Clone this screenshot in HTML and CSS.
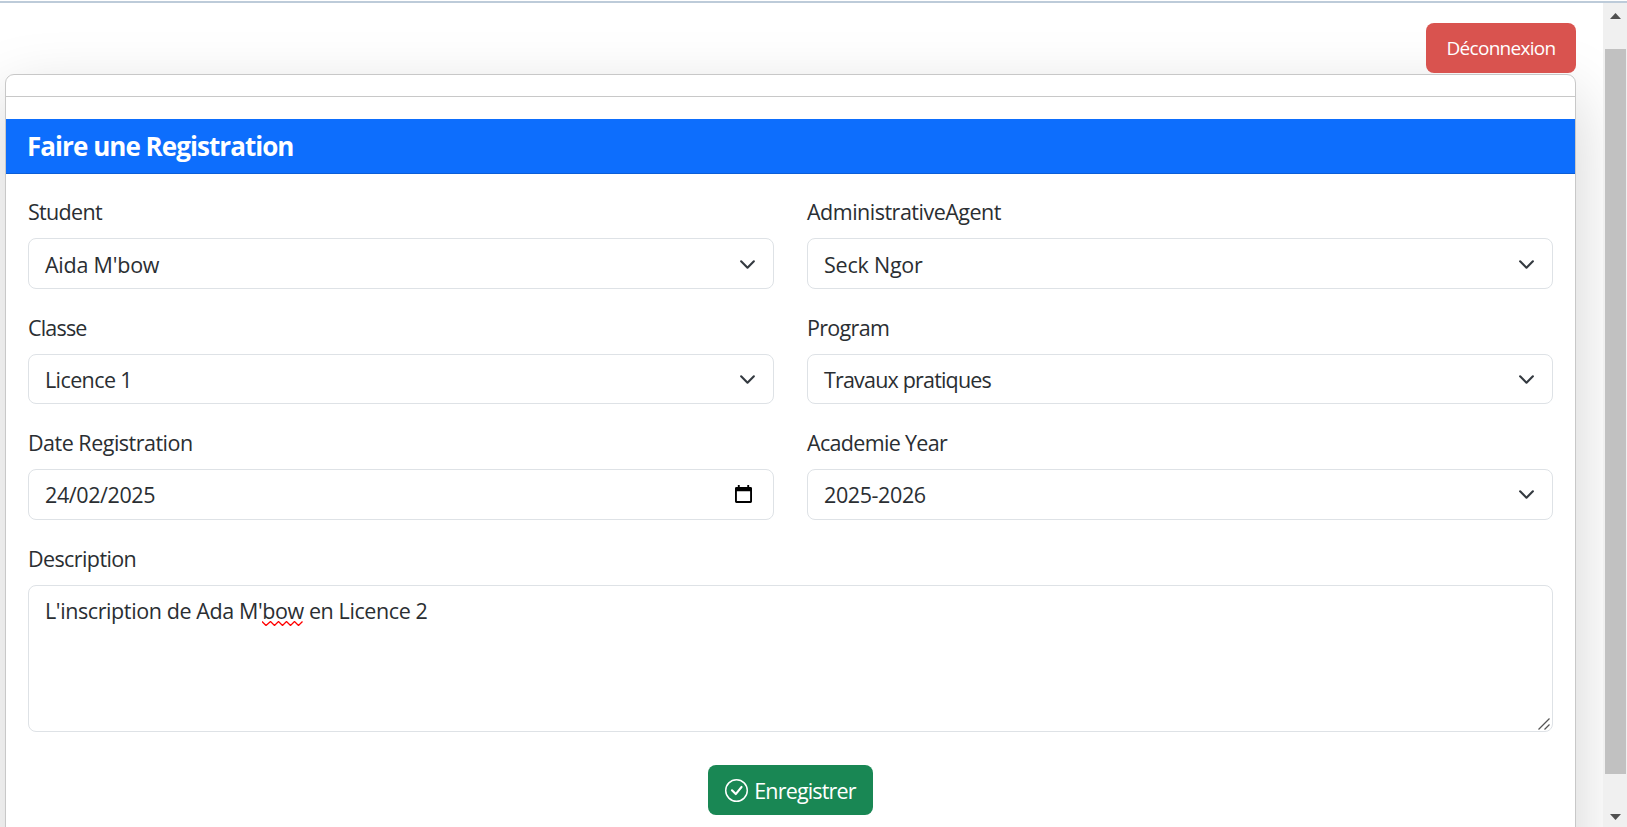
FILE: index.html
```
<!DOCTYPE html>
<html lang="fr">
<head>
<meta charset="utf-8">
<title>Faire une Registration</title>
<link rel="stylesheet" href="styles.css">
</head>
<body>
<div class="window">
  <main class="page">
    <div class="topbar"><button class="btn btn-logout"><span>Déconnexion</span></button></div>
    <section class="card">
      <div class="strip"></div>
      <h1 class="card-title"><span>Faire une Registration</span></h1>
      <form class="form">
        <div class="field">
          <label class="tight">Student</label>
          <div class="control first"><span class="loose">Aida M'bow</span><svg class="chevron" viewBox="0 0 16 16"><path d="m2 5 6 6 6-6"/></svg></div>
        </div>
        <div class="field">
          <label>AdministrativeAgent</label>
          <div class="control first"><span class="loose">Seck Ngor</span><svg class="chevron" viewBox="0 0 16 16"><path d="m2 5 6 6 6-6"/></svg></div>
        </div>
        <div class="field">
          <label class="tighter">Classe</label>
          <div class="control short"><span class="snug">Licence 1</span><svg class="chevron" viewBox="0 0 16 16"><path d="m2 5 6 6 6-6"/></svg></div>
        </div>
        <div class="field">
          <label class="tight">Program</label>
          <div class="control short"><span class="tighter">Travaux pratiques</span><svg class="chevron" viewBox="0 0 16 16"><path d="m2 5 6 6 6-6"/></svg></div>
        </div>
        <div class="field">
          <label>Date Registration</label>
          <div class="control"><span class="relaxed">24/02/2025</span><svg class="calendar" viewBox="0 0 18 20"><path fill-rule="evenodd" d="M3 0h2v2h8V0h2v2h1.500a1.500 1.500 0 0 1 1.500 1.500v14a1.500 1.500 0 0 1-1.500 1.500h-15A1.500 1.500 0 0 1 0 17.500v-14A1.500 1.500 0 0 1 1.500 2H3zM2 6.500V17h14V6.500z"/></svg></div>
        </div>
        <div class="field">
          <label class="tight">Academie Year</label>
          <div class="control"><span class="relaxed">2025-2026</span><svg class="chevron" viewBox="0 0 16 16"><path d="m2 5 6 6 6-6"/></svg></div>
        </div>
        <div class="field wide">
          <label class="snug">Description</label>
          <div class="control area"><span class="relaxed">L'inscription de Ada M'<span class="misspelled">bow<svg class="squiggle" viewBox="0 0 41 5"><path d="M0 .5l4 4 4.500-4 4 4 4-4 4 4 4-4 4 4 4-4 4 4 4-4"/></svg></span> en Licence 2</span><svg class="grip" viewBox="0 0 12 12"><path d="M.5 11.500l11-11M6.500 11.500l5-5"/></svg></div>
        </div>
      </form>
      <div class="actions">
        <button class="btn btn-save"><svg class="check" viewBox="0 0 16 16"><path d="M8 15A7 7 0 1 1 8 1a7 7 0 0 1 0 14m0 1A8 8 0 1 0 8 0a8 8 0 0 0 0 16"/><path d="m10.970 4.970-.020.022-3.473 4.425-2.093-2.094a.75.75 0 0 0-1.060 1.060L6.970 11.030a.75.75 0 0 0 1.079-.020l3.992-4.990a.75.75 0 0 0-1.071-1.050"/></svg><span class="tighter">Enregistrer</span></button>
      </div>
    </section>
  </main>
  <aside class="scrollbar">
    <svg class="arrow" viewBox="0 0 11 6"><path d="M5.500 0 11 6H0z"/></svg>
    <div class="thumb"></div>
    <svg class="arrow" viewBox="0 0 11 6"><path d="M0 0h11L5.500 6z"/></svg>
  </aside>
</div>
</body>
</html>
```
FILE: styles.css
```
* { box-sizing: border-box; }
body {
  margin: 0;
  height: 827px;
  overflow: hidden;
  background: #fff;
  color: #2a2e32;
  font-family: "Open Sans", "Noto Sans", sans-serif;
  font-size: 21.5px;
  line-height: 33px;
  letter-spacing: -0.5px;
}
svg { display: block; flex: none; }
.loose { letter-spacing: -0.22px; }
.relaxed { letter-spacing: -0.4px; }
.snug { letter-spacing: -0.6px; }
.tight { letter-spacing: -0.68px; }
.tighter { letter-spacing: -0.82px; }
.window {
  display: flex;
  height: 827px;
  border-top: 2px solid #bdcbd9;
  margin-top: 1px;
}
.page { flex: 1; min-width: 0; padding: 20px 27px 0 5px; overflow: hidden; }
.topbar { display: flex; justify-content: flex-end; height: 51px; position: relative; z-index: 1; }
.btn {
  display: flex;
  align-items: center;
  justify-content: center;
  height: 50px;
  border: 0;
  border-radius: 8px;
  color: #fff;
  font: inherit;
  letter-spacing: inherit;
  white-space: nowrap;
}
.btn-logout { width: 150px; background: #d9534f; font-size: 19px; letter-spacing: -0.7px; }
.card {
  height: 850px;
  background: #fff;
  border: 1px solid #c8c8c8;
  border-radius: 9px;
  box-shadow: 0 22px 66px rgba(0, 0, 0, .175);
}
.strip { height: 22px; border-bottom: 1px solid #c8c8c8; }
.card-title {
  margin: 22px 0 0;
  height: 55px;
  padding-left: 21px;
  background: #0d6efd;
  border-bottom: 1px solid #0b5ed7;
  color: #fff;
  font-size: 26px;
  font-weight: 700;
  letter-spacing: -0.95px;
  line-height: 54px;
}
.form {
  display: grid;
  grid-template-columns: 746px 746px;
  grid-template-rows: 116px 115px 116px 191px;
  column-gap: 33px;
  padding: 20px 22px 0;
}
.field label { display: block; height: 44px; line-height: 35px; }
.control {
  display: flex;
  align-items: center;
  justify-content: space-between;
  height: 51px;
  padding: 0 17px 0 16px;
  border: 1px solid #dee2e6;
  border-radius: 8px;
}
.first { padding-top: 2px; }
.short { height: 50px; }
.wide { grid-column: 1 / -1; }
.chevron {
  width: 17px;
  height: 17px;
  fill: none;
  stroke: #343a40;
  stroke-width: 2;
  stroke-linecap: round;
  stroke-linejoin: round;
}
.first .chevron { margin-bottom: 1px; }
.calendar { width: 17px; height: 19px; margin-right: 4px; fill: #000; }
.area { height: 147px; align-items: flex-start; padding: 8px 2px 1px 16px; }
.misspelled { position: relative; }
.squiggle {
  position: absolute;
  left: 0;
  bottom: -1px;
  width: 41px;
  height: 5px;
  fill: none;
  stroke: #f00;
  stroke-width: 1.300;
}
.grip { align-self: flex-end; width: 12px; height: 12px; fill: none; stroke: #555; stroke-width: 1.3; }
.actions { display: flex; padding: 33px 0 0 702px; }
.btn-save { width: 165px; gap: 6px; background: #198754; }
.check { width: 23px; height: 23px; fill: #fff; }
.scrollbar {
  display: flex;
  flex-direction: column;
  align-items: center;
  width: 24px;
  height: 824px;
  padding: 10px 0 0;
  background: #f0f0f0;
}
.arrow { width: 11px; height: 6px; fill: #505050; }
.thumb { width: 21px; height: 725px; margin: 30px 0 40px 1px; background: #c1c1c1; }
```
